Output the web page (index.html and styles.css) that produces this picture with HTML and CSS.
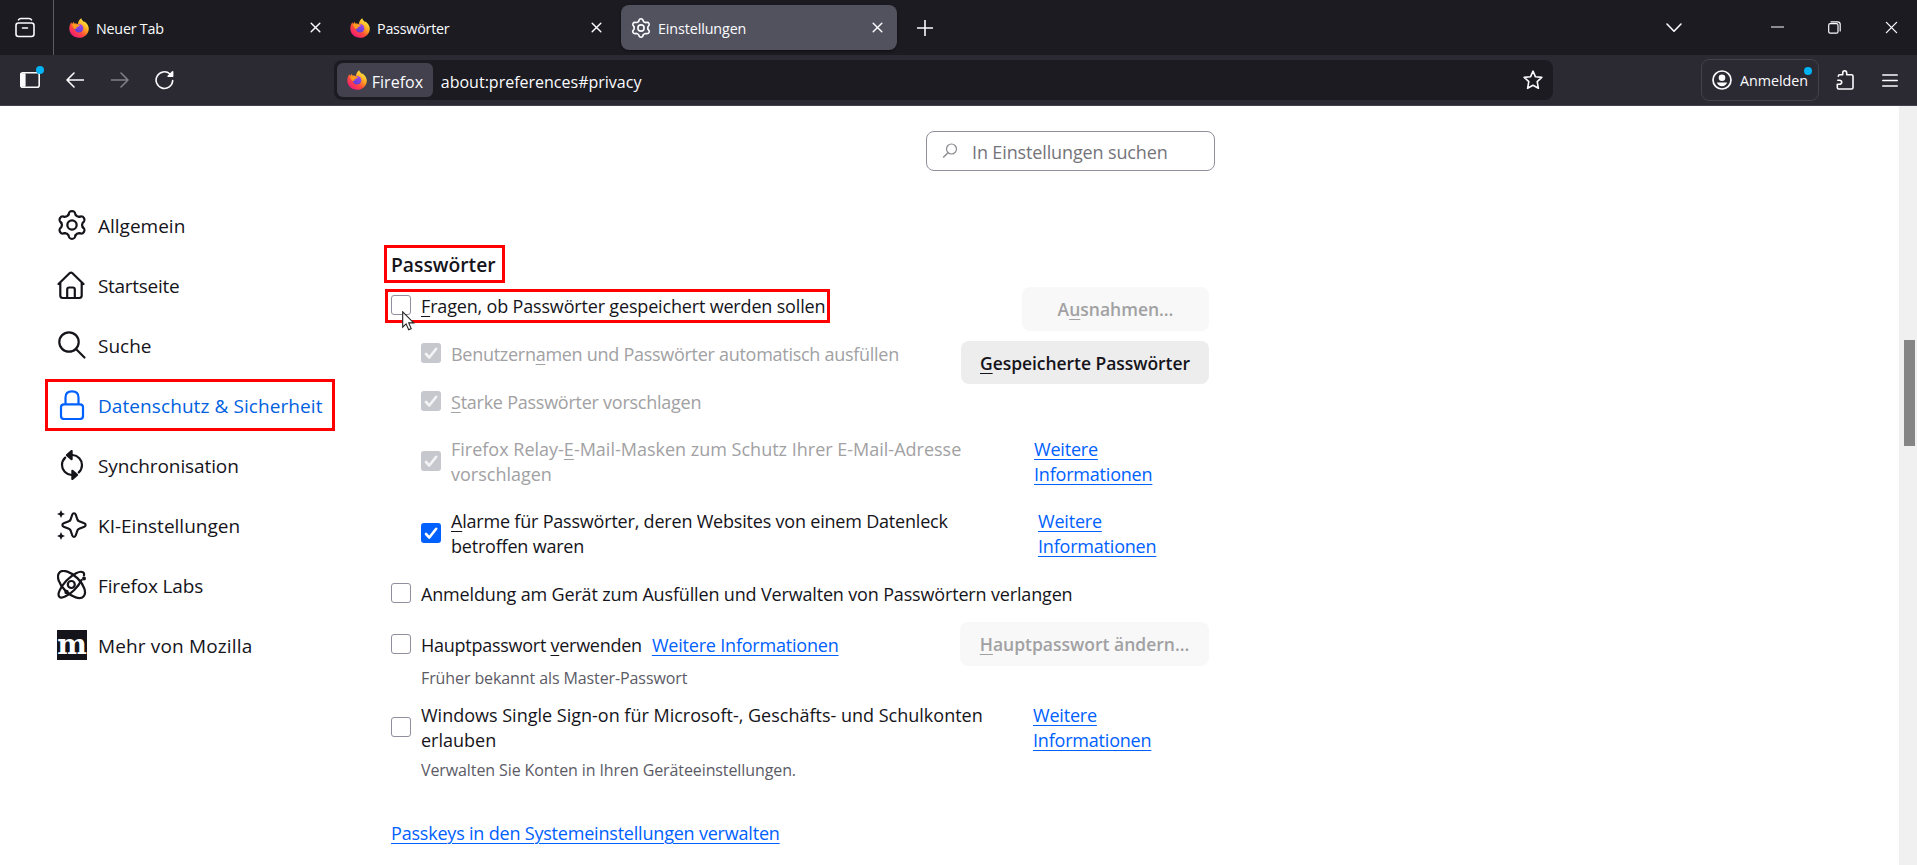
FILE: index.html
```
<!DOCTYPE html>
<html lang="de">
<head>
  <meta charset="UTF-8" />
  <meta name="viewport" content="width=device-width, initial-scale=1.0"/>
  <title>Einstellungen</title>
  <link rel="stylesheet" href="styles.css">
</head>
<body>

  <!-- shared icons -->
  <svg class="defs" width="0" height="0">
    <defs>
      <linearGradient id="fx-body" x1="0.85" y1="0.1" x2="0.2" y2="0.95">
        <stop offset="0" stop-color="#fff04a"/>
        <stop offset="0.35" stop-color="#ffa61f"/>
        <stop offset="0.65" stop-color="#ff4a3c"/>
        <stop offset="1" stop-color="#f0167f"/>
      </linearGradient>
      <linearGradient id="fx-globe" x1="0.7" y1="0" x2="0.3" y2="1">
        <stop offset="0" stop-color="#a244ee"/>
        <stop offset="1" stop-color="#5b3fd0"/>
      </linearGradient>
      <path id="tooth" d="M-2.300-6.900C-1.900-8.900-1.400-9.200 0-9.200S1.900-8.900 2.300-6.900Q3.100-5.400 4.830-5.440"/>
    </defs>
    <symbol id="firefox" viewBox="0 0 20 20">
      <path d="M12.300.2c.3 1.800 1.500 2.600 2.800 3.800l.4-.6c2.500 1.900 4.300 4.400 4.300 7.300 0 5-4.300 9.100-9.700 9.100C4.500 19.800.3 15.700.3 10.500c0-2.500.8-4.700 2.200-6.300l.5 1.900L4.700 3.700l.7 2.200c1-.4 2.300-.3 3.500.1C9.100 3.500 10.400 1.500 12.300.2z" fill="url(#fx-body)"/>
      <circle cx="10" cy="10.300" r="4.300" fill="url(#fx-globe)"/>
      <path d="M3.200 6.200c1.800-1 4-.8 5.200.3 1.200-.3 2.300 0 3 .7-1.800.3-2 1.800-3.300 2.100-1 .2-1.300.8-.6 1.700-2.600.3-4.200-2-4.300-4.800z" fill="#ff9a1f"/>
    </symbol>
    <symbol id="gear" viewBox="0 0 20 20">
      <g transform="translate(10 10)">
        <use href="#tooth"/>
        <use href="#tooth" transform="rotate(60)"/>
        <use href="#tooth" transform="rotate(120)"/>
        <use href="#tooth" transform="rotate(180)"/>
        <use href="#tooth" transform="rotate(240)"/>
        <use href="#tooth" transform="rotate(300)"/>
        <circle r="3.100"/>
      </g>
    </symbol>
    <symbol id="close" viewBox="0 0 12 12">
      <path d="M1.300 1.300l9.400 9.400M10.700 1.300L1.300 10.700"/>
    </symbol>
    <symbol id="check" viewBox="0 0 20 20">
      <path d="M5 11l3.300 3.500L15.200 5.800"/>
    </symbol>
  </svg>

  <!-- Tab strip -->
  <div class="tabbar">
    <div class="view-btn">
      <svg class="stroke" width="22" height="22" viewBox="0 0 22 22"><rect x="2" y="6" width="18" height="13.500" rx="2.500"/><path d="M8.500 11h5M4.500 2.800C5 1.900 5.800 1.500 7 1.500h8c1.200 0 2 .4 2.500 1.300"/></svg>
    </div>
    <div class="tab">
      <svg width="20" height="20"><use href="#firefox"/></svg>
      <span>Neuer Tab</span>
      <svg class="stroke" width="11" height="11"><use href="#close"/></svg>
    </div>
    <div class="tab">
      <svg width="20" height="20"><use href="#firefox"/></svg>
      <span>Passwörter</span>
      <svg class="stroke" width="11" height="11"><use href="#close"/></svg>
    </div>
    <div class="tab active">
      <svg class="stroke" width="20" height="20"><use href="#gear"/></svg>
      <span>Einstellungen</span>
      <svg class="stroke" width="11" height="11"><use href="#close"/></svg>
    </div>
    <svg class="stroke new-tab" width="16" height="16" viewBox="0 0 16 16"><path d="M8 .5v15M.5 8h15"/></svg>
    <div class="window-btns">
      <svg class="stroke" width="16" height="10" viewBox="0 0 16 10"><path d="M1 1l7 7.200L15 1"/></svg>
      <svg class="stroke thin" width="13" height="13" viewBox="0 0 13 13"><path d="M0 6h13"/></svg>
      <svg class="stroke thin" width="13" height="13" viewBox="0 0 13 13"><rect x=".7" y="2.700" width="9.300" height="9.500" rx="1.500"/><path d="M3 .8h6.500c1.600 0 2.700 1 2.700 2.700V10"/></svg>
      <svg class="stroke thin" width="13" height="13"><use href="#close"/></svg>
    </div>
  </div>

  <!-- Navigation bar -->
  <div class="navbar">
    <div class="nav-btns">
      <div class="dot-wrap">
        <svg class="stroke" width="20" height="16" viewBox="0 0 20 16"><rect x=".8" y=".8" width="18.400" height="14.400" rx="2"/><path d="M1 2h3.800v12H1z" fill="#fbfbfe"/></svg>
        <i class="dot"></i>
      </div>
      <svg class="stroke" width="18" height="16" viewBox="0 0 18 16"><path d="M17.500 8H1M8 1L1 8l7 7"/></svg>
      <svg class="stroke faded" width="18" height="16" viewBox="0 0 18 16"><path d="M.5 8H17M10 1l7 7-7 7"/></svg>
      <svg class="stroke" width="20" height="20" viewBox="0 0 20 20"><path d="M17.700 10.500A8.300 8.300 0 1 1 15 4"/><path d="M17.600 1.800v4.500h-4.500z" fill="#fbfbfe"/></svg>
    </div>
    <div class="urlbar">
      <div class="identity">
        <svg width="20" height="20"><use href="#firefox"/></svg>
        <span>Firefox</span>
      </div>
      <span class="url">about:preferences#privacy</span>
      <svg class="stroke" width="20" height="20" viewBox="0 0 20 20"><path d="M10 1.200l2.500 5.600 6.300.6-4.600 4.300 1.200 6.600-5.400-3-5.400 3 1.200-6.600L1.200 7.400l6.300-.6z"/></svg>
    </div>
    <div class="account">
      <svg width="20" height="20" viewBox="0 0 20 20"><circle cx="10" cy="10" r="9" fill="none" stroke="#fbfbfe" stroke-width="1.700"/><circle cx="10" cy="7.800" r="3.300" fill="#fbfbfe"/><path d="M4.800 12.500h10.400c-.9 2.400-2.900 3.800-5.200 3.800s-4.300-1.400-5.200-3.800z" fill="#fbfbfe"/></svg>
      <span>Anmelden</span>
      <i class="dot"></i>
    </div>
    <svg class="stroke ext" width="18" height="20" viewBox="0 0 18 20"><path d="M2.300 6.200c0-1 .5-1.500 1.500-1.500h2.900V3.300c0-1.500.8-2.500 2-2.500s2 1 2 2.500v1.400h4.800c1 0 1.500.5 1.500 1.500v11.300c0 1-.5 1.500-1.500 1.500H2.800c-1 0-1.500-.5-1.500-1.500v-3.300h1.900c1.600 0 2.500-.8 2.500-2s-.9-2-2.500-2H1.800"/></svg>
    <svg class="stroke" width="16" height="13" viewBox="0 0 16 13"><path d="M.8 1h14.400M.8 6.500h14.400M.8 12h14.400"/></svg>
  </div>

  <div class="page">
    <nav class="sidebar">
      <a class="cat">
        <svg class="stroke" width="30" height="30"><use href="#gear"/></svg>
        <span>Allgemein</span>
      </a>
      <a class="cat home">
        <svg class="stroke" width="30" height="30" viewBox="0 0 30 30"><path d="M1.500 14L12.500 3.200c1-.9 2-.9 3 0L26.500 14M3.300 12.500v13c0 1.500.8 2.500 2.500 2.500h16.400c1.700 0 2.500-1 2.500-2.500v-13M10.200 28v-8.500c0-1.300.7-2 2-2h3.600c1.300 0 2 .7 2 2V28"/></svg>
        <span>Startseite</span>
      </a>
      <a class="cat">
        <svg class="stroke" width="30" height="30" viewBox="0 0 30 30"><circle cx="12" cy="12" r="9.700"/><path d="M19 19l8.500 8.500"/></svg>
        <span>Suche</span>
      </a>
      <a class="cat selected">
        <svg class="stroke" width="30" height="30" viewBox="0 0 30 30"><rect x="4" y="14.300" width="22" height="14.700" rx="3"/><path d="M8.500 14V7.500C8.500 3.700 11 1.300 15 1.300s6.500 2.400 6.500 6.200V14"/></svg>
        <span>Datenschutz &amp; Sicherheit</span>
        <i class="mark mark-cat"></i>
      </a>
      <a class="cat sync">
        <svg class="stroke" width="30" height="30" viewBox="0 0 30 30"><path d="M15.500 5c5.500.4 9.500 4.700 9.500 10 0 3-1.200 5.500-3.200 7.400M14.500 25C9 24.600 5 20.300 5 15c0-3 1.200-5.500 3.200-7.400"/><path d="M14.600 1v8.200L10 5.100zM15.400 20.800V29l4.600-4.100z" fill="#15141a"/></svg>
        <span>Synchronisation</span>
      </a>
      <a class="cat">
        <svg class="stroke" width="30" height="30" viewBox="0 0 30 30"><path d="M15.300 4.500c.6-1.700 2.800-1.700 3.400 0l1.700 5c.3.800.9 1.400 1.700 1.700l5.200 2.100c1.700.6 1.700 2.800 0 3.400l-5.200 2.100c-.8.300-1.400.9-1.700 1.700l-1.700 5c-.6 1.700-2.800 1.700-3.400 0l-1.700-5c-.3-.8-.9-1.400-1.700-1.700l-5.200-2.100c-1.700-.6-1.700-2.800 0-3.400l5.200-2.100c.8-.3 1.400-.9 1.700-1.700z"/><path d="M0 4l2.800-1.200L4 0l1.200 2.800L8 4 5.200 5.200 4 8 2.800 5.200zM0 26l2.800-1.200L4 22l1.200 2.800L8 26l-2.800 1.200L4 30l-1.200-2.800z" fill="#15141a" stroke="none"/></svg>
        <span>KI-Einstellungen</span>
      </a>
      <a class="cat labs">
        <svg class="stroke" width="30" height="30" viewBox="0 0 30 30"><ellipse cx="14.500" cy="14.500" rx="17" ry="8.700" transform="rotate(45 14.500 14.500)"/><path d="M24.500 10c-1.500 3.500-4.200 7-7.500 10.200C10.500 26.300 4.500 29 2.300 26.700S3 17.500 9.500 10.500C16 4 23 .3 26 2.300c1 .6 1.300 1.600 1 3"/><circle cx="14.300" cy="14.500" r="3.500"/><circle cx="27" cy="8.500" r="2" fill="#15141a" stroke="none"/><circle cx="9.500" cy="22" r="2.200" fill="#15141a" stroke="none"/></svg>
        <span>Firefox Labs</span>
      </a>
      <a class="cat more">
        <b class="moz">m</b>
        <span>Mehr von Mozilla</span>
      </a>
    </nav>

    <main class="main">
      <div class="search">
        <svg width="16" height="16" viewBox="0 0 16 16"><circle cx="9.500" cy="6" r="5" fill="none" stroke="#8a8a8e" stroke-width="1.200"/><path d="M6 9.700L1.200 14.600" stroke="#8a8a8e" stroke-width="1.400"/></svg>
        <span>In Einstellungen suchen</span>
      </div>

      <h2 class="title"><span>Passwörter</span><i class="mark mark-title"></i></h2>

      <div class="group">
        <div>
          <div class="row ask">
            <span class="box"></span>
            <span class="label"><u>F</u>ragen, ob Passwörter gespeichert werden sollen</span>
            <i class="mark mark-ask"></i>
            <svg class="cursor" width="13" height="20" viewBox="0 0 13 20"><path d="M.7.8v15.400l3.400-3.300 2.600 5.800 2.500-1.100-2.500-5.700h5z" fill="#fff" stroke="#222" stroke-width="1.100"/></svg>
          </div>
          <div class="row sub off autofill">
            <span class="box on"><svg width="20" height="20"><use href="#check"/></svg></span>
            <span class="label">Benutzern<u>a</u>men und Passwörter automatisch ausfüllen</span>
          </div>
          <div class="row sub off suggest">
            <span class="box on"><svg width="20" height="20"><use href="#check"/></svg></span>
            <span class="label"><u>S</u>tarke Passwörter vorschlagen</span>
          </div>
        </div>
        <div class="buttons">
          <button class="btn exceptions" disabled>A<u>u</u>snahmen…</button>
          <button class="btn saved"><u>G</u>espeicherte Passwörter</button>
        </div>
      </div>

      <div class="row sub off tall relay">
        <span class="box on"><svg width="20" height="20"><use href="#check"/></svg></span>
        <span class="label">Firefox Relay-<u>E</u>-Mail-Masken zum Schutz Ihrer E-Mail-Adresse<br>vorschlagen</span>
        <a class="link more1">Weitere<br>Informationen</a>
      </div>
      <div class="row sub tall breach">
        <span class="box on"><svg width="20" height="20"><use href="#check"/></svg></span>
        <span class="label"><u>A</u>larme für Passwörter, deren Websites von einem Datenleck<br>betroffen waren</span>
        <a class="link more2">Weitere<br>Informationen</a>
      </div>
      <div class="row os-auth">
        <span class="box"></span>
        <span class="label">Anmeldung am Gerät zum Ausfüllen und Verwalten von Passwörtern verlangen</span>
      </div>
      <div class="row primary">
        <span class="box"></span>
        <span class="label">Hauptpasswort <u>v</u>erwenden</span>
        <a class="link">Weitere Informationen</a>
        <button class="btn change" disabled><u>H</u>auptpasswort ändern…</button>
      </div>
      <p class="desc d1">Früher bekannt als Master-Passwort</p>
      <div class="row sso">
        <span class="box"></span>
        <span class="label">Windows Single Sign-on für Microsoft-, Geschäfts- und Schulkonten<br>erlauben</span>
        <a class="link more3">Weitere<br>Informationen</a>
      </div>
      <p class="desc d2">Verwalten Sie Konten in Ihren Geräteeinstellungen.</p>
      <a class="link passkeys">Passkeys in den Systemeinstellungen verwalten</a>
    </main>

    <div class="scrollbar"><div class="thumb"></div></div>
  </div>

</body>
</html>
```

FILE: styles.css
```
* { box-sizing: border-box; }
body {
  margin: 0;
  height: 865px;
  overflow: hidden;
  font-family: "Open Sans", "Noto Sans", sans-serif;
  font-size: 18px;
  color: #15141a;
  background: #fff;
}
svg { flex: none; display: block; }
.defs { position: absolute; }
.stroke {
  fill: none;
  stroke: #fbfbfe;
  stroke-width: 1.6;
  stroke-linecap: round;
  stroke-linejoin: round;
}
.stroke.thin { stroke-width: 1.2; }
.faded { opacity: 0.4; }

/* Tab strip */
.tabbar {
  display: flex;
  align-items: center;
  height: 55px;
  background: #1c1b22;
  color: #fbfbfe;
  font-size: 14.3px;
}
.view-btn {
  display: flex;
  align-items: center;
  width: 54px;
  height: 55px;
  padding-left: 14px;
  border-right: 1px solid #5b5b66;
}
.tab {
  display: flex;
  align-items: center;
  width: 276px;
  height: 45px;
  margin-left: 5px;
  padding: 0 14px 0 10px;
  border-radius: 8px;
}
.tab span { flex: 1; margin-left: 7px; padding-top: 1px; letter-spacing: -0.22px; }
.tab.active { background: #52525e; box-shadow: 0 1px 3px rgba(0,0,0,0.5); }
.tab.active span { letter-spacing: -0.1px; }
.new-tab { margin-left: 20px; }
.window-btns {
  display: flex;
  align-items: center;
  margin-left: auto;
  padding-right: 19px;
}
.window-btns svg:nth-child(2) { margin-left: 89px; }
.window-btns svg:nth-child(3) { margin-left: 44px; }
.window-btns svg:nth-child(4) { margin-left: 44px; }

/* Navigation bar */
.navbar {
  display: flex;
  align-items: center;
  height: 51px;
  padding: 0 19px 0 20px;
  background: #2b2a33;
  border-bottom: 1px solid #42414d;
  color: #fbfbfe;
}
.nav-btns { display: flex; align-items: center; width: 314px; }
.nav-btns svg:nth-child(2) { margin-left: 26px; }
.nav-btns svg:nth-child(3) { margin-left: 27px; }
.nav-btns svg:nth-child(4) { margin-left: 26px; }
.dot-wrap { position: relative; }
.dot {
  position: absolute;
  top: -6px;
  right: -4px;
  width: 8px;
  height: 8px;
  border-radius: 50%;
  background: #00b3f4;
}
.urlbar {
  display: flex;
  align-items: center;
  width: 1220px;
  height: 40px;
  padding: 0 10px 0 3px;
  border-radius: 8px;
  background: #1c1b22;
}
.identity {
  display: flex;
  align-items: center;
  width: 96px;
  height: 34px;
  padding-left: 10px;
  border-radius: 6px;
  background: #42414d;
  font-size: 16px;
}
.identity span { margin-left: 5px; padding-top: 3px; }
.url { flex: 1; margin-left: 8px; padding-top: 3px; font-size: 16px; }
.account {
  position: relative;
  display: flex;
  align-items: center;
  width: 118px;
  height: 42px;
  margin-left: 148px;
  padding-left: 10px;
  border: 1px solid #42414d;
  border-radius: 8px;
  font-size: 14.3px;
}
.account span { margin-left: 8px; letter-spacing: -0.05px; }
.account .dot { top: 7px; right: 6px; }
.ext { margin: 0 28px 0 17px; }

/* Page */
.page { display: flex; height: 759px; }
.sidebar { width: 391px; padding: 89px 0 0 57px; }
.sidebar .stroke { stroke: #15141a; stroke-width: 2.2; }
.sidebar .cat:first-child .stroke { stroke-width: 1.5; }
.cat {
  position: relative;
  display: flex;
  align-items: center;
  height: 60px;
  font-size: 19px;
}
.cat span { margin-left: 11px; padding-top: 1px; white-space: nowrap; }
.home span { letter-spacing: -0.3px; }
.sync span { letter-spacing: -0.1px; }
.labs span { letter-spacing: -0.15px; }
.more span { letter-spacing: 0.15px; }
.cat.selected { color: #0061e0; letter-spacing: 0.08px; }
.sidebar .selected .stroke { stroke: #0061ff; }
.moz {
  display: flex;
  align-items: center;
  justify-content: center;
  width: 30px;
  height: 30px;
  padding-bottom: 1px;
  background: #15141a;
  color: #fff;
  font-family: "DejaVu Serif", serif;
  font-size: 28px;
  line-height: 23px;
}
.mark { position: absolute; border: 3px solid #f00; }
.mark-cat { left: -12px; top: 4px; width: 290px; height: 52px; }
.mark-title { left: -7px; top: 0; width: 121px; height: 38px; }
.mark-ask { left: -6px; top: 2px; width: 445px; height: 34px; }

.main { width: 824px; padding-top: 25px; }
.search {
  display: flex;
  align-items: center;
  width: 289px;
  height: 40px;
  margin-left: 535px;
  padding-left: 15px;
  border: 1px solid #8f8f9d;
  border-radius: 8px;
  color: #74747a;
  letter-spacing: -0.13px;
}
.search span { margin-left: 14px; padding-top: 2px; }
.title {
  position: relative;
  height: 38px;
  margin: 74px 0 4px;
  font-size: 19.3px;
  font-weight: 600;
  line-height: 39px;
}
.group { display: flex; justify-content: space-between; width: 818px; height: 138px; }
.row {
  position: relative;
  display: flex;
  align-items: center;
  width: 818px;
  height: 48px;
  line-height: 25px;
  white-space: nowrap;
}
.row.ask { height: 42px; padding-bottom: 6px; width: 440px; letter-spacing: -0.17px; }
.sub { padding-left: 30px; width: 600px; }
.group .sub { width: 500px; }
.autofill { letter-spacing: -0.28px; }
.suggest { letter-spacing: -0.25px; }
.breach .label { letter-spacing: -0.2px; }
.os-auth { letter-spacing: -0.16px; }
.primary .label { letter-spacing: -0.26px; }
.box {
  flex: none;
  width: 20px;
  height: 20px;
  margin-right: 10px;
  border: 1px solid #8f8f9d;
  border-radius: 3px;
}
.box.on { border: none; background: #0061ff; }
.box svg { fill: none; stroke: #fff; stroke-width: 2.6; stroke-linecap: round; stroke-linejoin: round; }
.off { color: #a1a1a3; }
.off .box.on { background: #c7c7ce; }
.off .box svg { stroke: #f4f4f6; }
.row u, .btn u { text-decoration-thickness: 1px; text-underline-offset: 3px; }
.tall { width: 818px; height: 72px; }
.label { flex: none; padding-top: 2px; }
.link {
  padding-top: 2px;
  color: #0061ff;
  letter-spacing: -0.2px;
  text-decoration: underline;
  text-decoration-thickness: 1px;
  text-underline-offset: 3px;
}
.cursor { position: absolute; left: 11px; top: 24px; }

.buttons { display: flex; flex-direction: column; align-items: flex-end; gap: 10px; }
.btn {
  height: 44px;
  padding: 0;
  border: none;
  border-radius: 8px;
  background: #ededee;
  color: #15141a;
  font-family: inherit;
  font-size: 17.5px;
  font-weight: 600;
}
.btn:disabled { background: #f8f8f8; color: #a1a1a3; }
.exceptions { width: 187px; }
.saved { width: 248px; height: 43px; letter-spacing: -0.05px; }
.change { width: 249px; margin-left: auto; }

.primary { height: 54px; }
.primary .link { margin-left: 10px; }
.desc { margin: 0 0 0 30px; height: 23px; font-size: 16px; line-height: 24px; color: #5b5b66; letter-spacing: -0.1px; }
.d1 { margin-top: -5px; }
.sso { height: 50px; margin: 13px 0 6px; }
.passkeys { display: block; margin-top: 38px; white-space: nowrap; }
.more1 { position: absolute; left: 643px; }
.more2 { position: absolute; left: 647px; }
.more3 { position: absolute; left: 642px; }

.scrollbar { width: 18px; margin-left: auto; padding: 234px 2px 0 5px; background: #f0f0f0; }
.thumb { height: 106px; background: #858585; }
```
